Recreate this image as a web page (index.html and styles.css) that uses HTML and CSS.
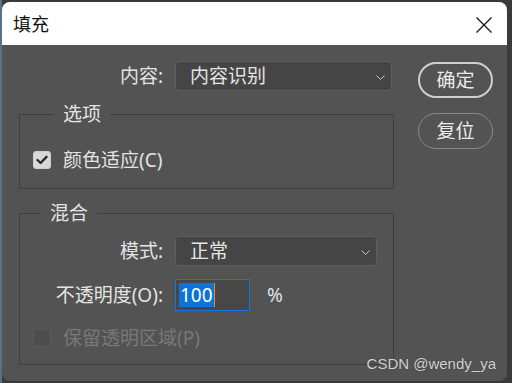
FILE: index.html
```html
<!DOCTYPE html>
<html lang="zh-CN">
<head>
  <meta charset="UTF-8" />
  <meta name="viewport" content="width=device-width, initial-scale=1" />
  <title>填充</title>
  <link rel="stylesheet" href="styles.css">
</head>
<body>
  <div class="dialog" role="dialog" aria-label="填充">
    <div class="titlebar">
      <span class="title">填充</span>
      <button class="close" aria-label="关闭">
        <svg width="18" height="18" viewBox="0 0 18 18" aria-hidden="true">
          <path d="M1.5 1.5 L16.5 16.5 M16.5 1.5 L1.5 16.5" stroke="#1a1a1a" stroke-width="1.4" fill="none" />
        </svg>
      </button>
    </div>

    <div class="dialog-body">
      <form class="main">
        <div class="row">
          <span class="field-label">内容:</span>
          <div class="select select-wide">
            <span>内容识别</span>
            <svg class="chevron" width="9" height="5" viewBox="0 0 9 5" aria-hidden="true">
              <polyline points="0.5,0.5 4.5,4.5 8.5,0.5" stroke="#c8c8c8" stroke-width="1" fill="none" />
            </svg>
          </div>
        </div>

        <!-- 选项 -->
        <fieldset class="group group-options">
          <legend>选项</legend>
          <label class="check-row">
            <span class="checkbox checked">
              <svg width="12" height="10" viewBox="0 0 12 10" aria-hidden="true">
                <polyline points="1.5,5 4.6,8 10.5,1.8" stroke="#2b2b2b" stroke-width="2.4" fill="none" stroke-linecap="round" stroke-linejoin="round" />
              </svg>
            </span>
            颜色适应(C)
          </label>
        </fieldset>

        <!-- 混合 -->
        <fieldset class="group group-blend">
          <legend>混合</legend>
          <div class="row">
            <span class="field-label field-label-inset">模式:</span>
            <div class="select select-narrow">
              <span>正常</span>
              <svg class="chevron" width="9" height="5" viewBox="0 0 9 5" aria-hidden="true">
                <polyline points="0.5,0.5 4.5,4.5 8.5,0.5" stroke="#c8c8c8" stroke-width="1" fill="none" />
              </svg>
            </div>
          </div>
          <div class="row row-opacity">
            <span class="field-label field-label-inset">不透明度(O):</span>
            <div class="num-input"><span class="selected">100</span><span class="caret"></span></div>
            <span class="unit">%</span>
          </div>
          <label class="check-row disabled">
            <span class="checkbox"></span>
            保留透明区域(P)
          </label>
        </fieldset>
      </form>

      <div class="actions">
        <button class="pill pill-primary" type="button">确定</button>
        <button class="pill" type="button">复位</button>
      </div>
    </div>

    <div class="watermark">CSDN @wendy_ya</div>
  </div>
</body>
</html>
```

FILE: styles.css
```css
html, body {
  margin: 0;
  height: 100%;
}
body {
  background: linear-gradient(to right, #5c7087 2px, #3a3a3a 2px);
  font-family: "Noto Sans", "Noto Sans CJK SC", sans-serif;
  overflow: hidden;
}
.dialog {
  position: relative;
  width: 505px;
  height: 379px;
  margin: 2px 0 0 2px;
  border-radius: 8px;
  overflow: hidden;
  background: #535353;
  color: #e4e4e4;
  font-size: 19px;
}
.titlebar {
  height: 43px;
  background: #fff;
  display: flex;
  align-items: center;
  justify-content: space-between;
  padding: 0 14px 0 11px;
  color: #111;
}
.title {
  font-size: 18px;
  line-height: 1;
}
.close {
  border: none;
  background: none;
  padding: 0;
  display: flex;
  margin-top: 2px;
}
.dialog-body {
  display: flex;
  padding: 16px 0 0 17px;
}
.main {
  width: 375px;
  margin: 0;
}
.row {
  display: flex;
  align-items: center;
  height: 30px;
}
.field-label {
  width: 144px;
  text-align: right;
  margin-right: 12px;
  line-height: 1;
  white-space: nowrap;
}
.field-label-inset {
  width: 143px;
}
.select {
  box-sizing: border-box;
  height: 30px;
  display: flex;
  align-items: center;
  justify-content: space-between;
  padding: 0 6px 0 14px;
  background: #454545;
  border: 1px solid #5e5e5e;
  border-radius: 4px;
  line-height: 1;
}
.select-wide {
  width: 217px;
}
.select-narrow {
  width: 202px;
}
.chevron {
  margin-top: 3px;
}
.group {
  margin: 12px 0 0;
  padding: 25px 0 18px 13px;
  border: 1px solid #3e3e3e;
  min-width: 0;
}
.group legend {
  margin-left: 21px;
  padding: 0 9px;
  line-height: 22px;
  height: 22px;
}
.group-blend {
  margin-top: 13px;
  padding: 12px 0 16px 0;
}
.group-blend .check-row {
  margin-left: 13px;
  margin-top: 17px;
}
.row-opacity {
  height: 32px;
  margin-top: 13px;
}
.check-row {
  display: flex;
  align-items: center;
  height: 20px;
  line-height: 1;
}
.checkbox {
  box-sizing: border-box;
  width: 18px;
  height: 18px;
  border-radius: 3px;
  margin-right: 12px;
  display: flex;
  align-items: center;
  justify-content: center;
  background: #4d4d4d;
  border: 1px solid #5a5a5a;
}
.checkbox.checked {
  background: #d8d8d8;
  border-color: #cfcfcf;
}
.check-row.disabled {
  color: #787878;
}
.num-input {
  box-sizing: border-box;
  width: 75px;
  height: 32px;
  border: 1px solid #1b73e0;
  background: #474747;
  display: flex;
  align-items: center;
  padding-left: 3px;
}
.selected {
  background: #0a74d8;
  color: #fff;
  line-height: 24px;
  height: 24px;
  padding: 0 1px;
}
.caret {
  width: 1px;
  height: 24px;
  background: #f28a24;
}
.unit {
  margin-left: 17px;
  line-height: 1;
}
.actions {
  display: flex;
  flex-direction: column;
  gap: 15px;
  margin-left: 24px;
  padding-top: 1px;
}
.pill {
  box-sizing: border-box;
  width: 75px;
  height: 36px;
  border-radius: 18px;
  background: transparent;
  border: 1.5px solid #8a8a8a;
  color: #ececec;
  font-family: inherit;
  font-size: 19px;
  line-height: 1;
  padding: 0;
}
.pill-primary {
  border: 2px solid #cfcfcf;
}
.watermark {
  position: absolute;
  right: 11px;
  bottom: 9px;
  font-family: "Liberation Sans", Arial, sans-serif;
  font-size: 15px;
  color: #d2d2d2;
  text-shadow: 0 0 1px #333;
}
```
